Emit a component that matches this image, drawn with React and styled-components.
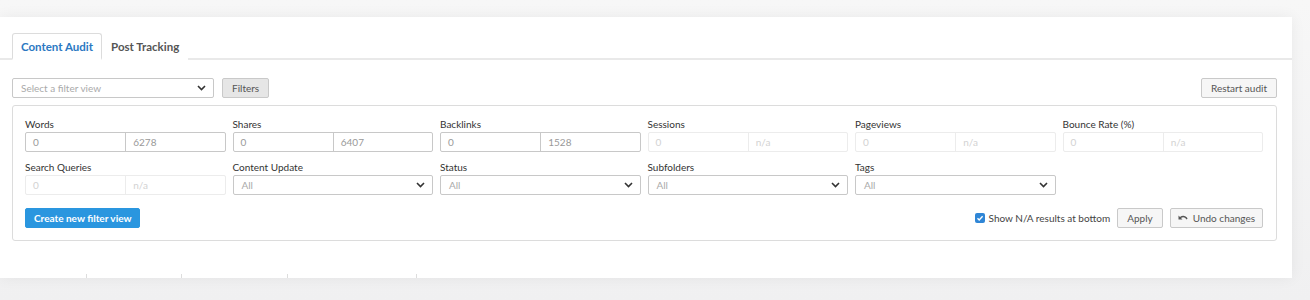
import React from 'react';
import styled, { createGlobalStyle } from 'styled-components';

const GlobalStyle = createGlobalStyle`
  body {
    margin: 0;
    background: #f2f2f3;
    font-family: Lato, "Open Sans", sans-serif;
    font-size: 10px;
    color: #333;
  }
`;

const Page = styled.div`
  width: 1310px;
  height: 300px;
  padding: 17px 18px 0 0;
  box-sizing: border-box;
  background: linear-gradient(#f7f7f7, #f0f0f1);
`;

const Card = styled.div`
  background: #fff;
  height: 261px;
  overflow: hidden;
  box-shadow: 0 0 14px rgba(0, 0, 0, 0.06);
`;

const Tabs = styled.div`
  display: flex;
  margin-top: 16px;
  padding-left: 12px;
  border-bottom: 2px solid #e9e9e9;
  height: 25px;
`;

const Tab = styled.div`
  display: flex;
  align-items: center;
  padding: 0 8px;
  margin-bottom: -2px;
  font-weight: 700;
  font-size: 11.5px;
  color: ${p => (p.$active ? '#2b78c2' : '#555')};
  border: 1px solid ${p => (p.$active ? '#dcdcdc' : 'transparent')};
  border-bottom: 2px solid ${p => (p.$active ? '#fff' : 'transparent')};
  border-radius: 3px 3px 0 0;
  background: #fff;
`;

const Toolbar = styled.div`
  display: flex;
  align-items: center;
  gap: 8px;
  margin-top: 18px;
  padding: 0 15px 0 12px;
`;

const Select = styled.div`
  display: flex;
  align-items: center;
  justify-content: space-between;
  width: ${p => p.$width || 'auto'};
  height: 20px;
  box-sizing: border-box;
  padding: 0 7px 0 8px;
  border: 1px solid #c8c8c8;
  border-radius: 2px;
  background: #fff;
  color: #aaa;
  font-size: 10px;
`;

const Button = styled.button`
  display: inline-flex;
  align-items: center;
  gap: ${p => p.$gap || 6}px;
  height: 20px;
  box-sizing: border-box;
  padding: 0 ${p => p.$px || 9}px;
  border: 1px solid ${p => (p.$primary ? '#2a96df' : '#c9c9c9')};
  border-radius: 2px;
  background: ${p => (p.$primary ? '#2a96df' : p.$grey ? '#e6e6e6' : '#f6f6f6')};
  color: ${p => (p.$primary ? '#fff' : '#555')};
  font-family: inherit;
  font-size: 10px;
  font-weight: ${p => (p.$primary ? 700 : 400)};
  cursor: pointer;
`;

const Spacer = styled.div`
  flex: 1;
`;

const Panel = styled.div`
  margin: 7px 15px 0 12px;
  border: 1px solid #dcdcdc;
  border-radius: 3px;
  padding: 11px 13px 12px 12px;
`;

const Grid = styled.div`
  display: grid;
  grid-template-columns: repeat(6, 1fr);
  column-gap: 7px;
  row-gap: 8px;
`;

const Field = styled.div`
  display: flex;
  flex-direction: column;
`;

const Label = styled.div`
  height: 15px;
  line-height: 14px;
  color: #333;
`;

const Range = styled.div`
  display: grid;
  grid-template-columns: 1fr 1fr;
  height: 20px;
  box-sizing: border-box;
  border: 1px solid ${p => (p.$disabled ? '#ececec' : '#c8c8c8')};
  border-radius: 2px;
  color: ${p => (p.$disabled ? '#d2d2d2' : '#999')};
  font-size: 10px;

  span {
    display: flex;
    align-items: center;
    padding-left: 7px;
  }
  span + span {
    border-left: 1px solid ${p => (p.$disabled ? '#ececec' : '#c8c8c8')};
  }
`;

const Footer = styled.div`
  display: flex;
  align-items: center;
  gap: 7px;
  margin-top: 13px;
`;

const Check = styled.label`
  display: flex;
  align-items: center;
  gap: 4px;
  color: #444;
`;

const Box = styled.span`
  width: 10px;
  height: 10px;
  border-radius: 2px;
  background: #2f86d6;
  display: flex;
  align-items: center;
  justify-content: center;
`;

const TableHead = styled.div`
  display: flex;
  margin-top: 33px;
  height: 12px;
`;

const HeadCell = styled.div`
  width: ${p => p.$w}px;
  border-left: ${p => (p.$first ? 'none' : '1px solid #ddd')};
  flex-shrink: 0;
`;

const Chevron = () => (
  <svg width="9" height="6" viewBox="0 0 9 6">
    <path d="M1 1l3.5 3.5L8 1" fill="none" stroke="#333" strokeWidth="1.6" />
  </svg>
);

const fields = [
  { label: 'Words', from: '0', to: '6278' },
  { label: 'Shares', from: '0', to: '6407' },
  { label: 'Backlinks', from: '0', to: '1528' },
  { label: 'Sessions', from: '0', to: 'n/a', disabled: true },
  { label: 'Pageviews', from: '0', to: 'n/a', disabled: true },
  { label: 'Bounce Rate (%)', from: '0', to: 'n/a', disabled: true },
];

const selects = ['Content Update', 'Status', 'Subfolders', 'Tags'];

export default function App() {
  return (
    <Page>
      <GlobalStyle />
      <Card>
        <Tabs>
          <Tab $active>Content Audit</Tab>
          <Tab>Post Tracking</Tab>
        </Tabs>
        <Toolbar>
          <Select $width="202px">
            Select a filter view
            <Chevron />
          </Select>
          <Button $grey>Filters</Button>
          <Spacer />
          <Button>Restart audit</Button>
        </Toolbar>
        <Panel>
          <Grid>
            {fields.map(f => (
              <Field key={f.label}>
                <Label>{f.label}</Label>
                <Range $disabled={f.disabled}>
                  <span>{f.from}</span>
                  <span>{f.to}</span>
                </Range>
              </Field>
            ))}
            <Field>
              <Label>Search Queries</Label>
              <Range $disabled>
                <span>0</span>
                <span>n/a</span>
              </Range>
            </Field>
            {selects.map(s => (
              <Field key={s}>
                <Label>{s}</Label>
                <Select>
                  All
                  <Chevron />
                </Select>
              </Field>
            ))}
          </Grid>
          <Footer>
            <Button $primary $px={8}>Create new filter view</Button>
            <Spacer />
            <Check>
              <Box>
                <svg width="8" height="8" viewBox="0 0 8 8">
                  <path d="M1.5 4.2l1.7 1.7L6.6 2.3" fill="none" stroke="#fff" strokeWidth="1.4" />
                </svg>
              </Box>
              Show N/A results at bottom
            </Check>
            <Button>Apply</Button>
            <Button $px={7} $gap={5}>
              <svg width="10" height="8" viewBox="0 0 10 8">
                <path d="M0.5 1.5v4h4L3 4c1.8-1.4 4-1 5.5 1.4L9.6 4.6C7.8 1.5 4.6 1 2 2.9z" fill="#555" />
              </svg>
              Undo changes
            </Button>
          </Footer>
        </Panel>
        <TableHead>
          <HeadCell $w={86} $first />
          <HeadCell $w={94} />
          <HeadCell $w={105} />
          <HeadCell $w={128} />
          <HeadCell $w={200} />
        </TableHead>
      </Card>
    </Page>
  );
}
